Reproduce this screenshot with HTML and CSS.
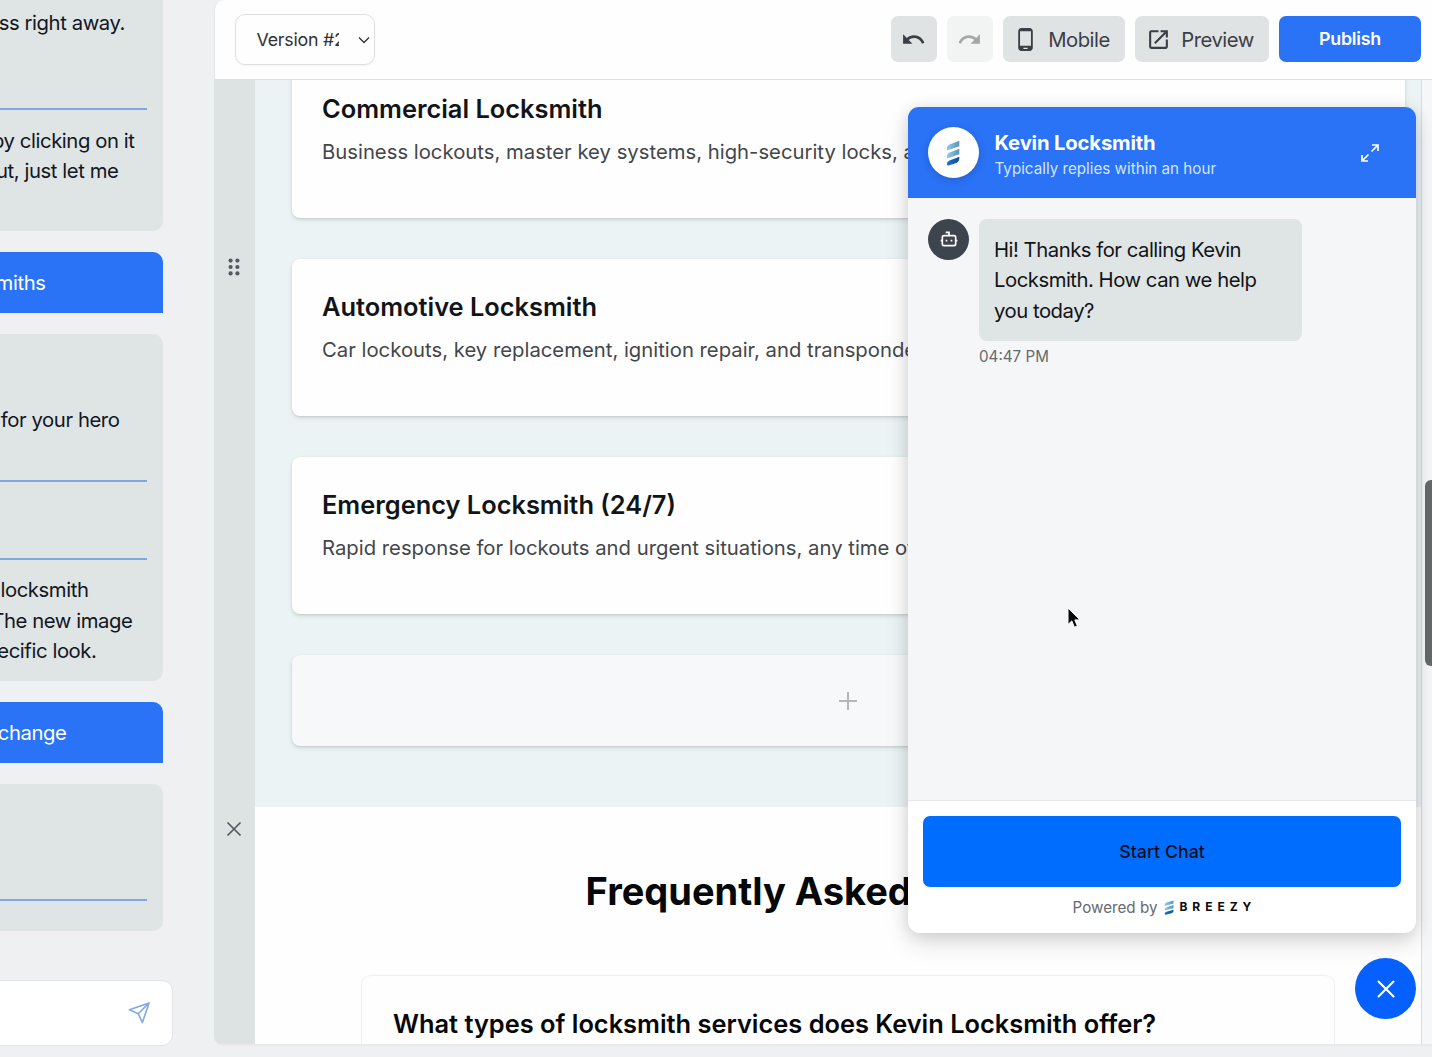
FILE: index.html
```html
<!DOCTYPE html>
<html lang="en">
<head>
<meta charset="utf-8">
<title>Site editor</title>
<link rel="stylesheet" href="styles.css">
</head>
<body>
<div class="app">
  <aside class="assistant">
    <div class="bubble bubble-first">
      <p class="line end-38">ess right away.</p>
      <hr class="rule">
      <p class="line end-28">by clicking on it</p>
      <p class="line end-44">ut, just let me</p>
    </div>
    <div class="reply"><p class="line end-117">miths</p></div>
    <div class="bubble bubble-hero">
      <p class="line end-43">for your hero</p>
      <hr class="rule rule-a">
      <hr class="rule rule-b">
      <p class="line end-74">locksmith</p>
      <p class="line end-30">The new image</p>
      <p class="line end-66">ecific look.</p>
    </div>
    <div class="reply"><p class="line end-96">change</p></div>
    <div class="bubble bubble-last"><hr class="rule"></div>
    <div class="composer">
      <svg class="send" viewBox="0 0 24 24"><path d="M22 2 1.500 9.200l9.200 4.100L15 22.500zM22 2 10.700 13.300"/></svg>
    </div>
  </aside>

  <main class="editor">
    <header class="toolbar">
      <div class="version"><span class="version-text">Version #2</span>
        <svg class="chevron" viewBox="0 0 12 8"><path d="M1 1.500 6 6.500 11 1.500"/></svg>
      </div>
      <div class="actions">
        <button class="btn icon-btn"><svg viewBox="0 0 24 24"><path d="M12.500 8c-2.650 0-5.050.99-6.900 2.600L2 7v9h9l-3.620-3.620c1.390-1.160 3.160-1.880 5.120-1.880 3.540 0 6.550 2.310 7.600 5.500l2.370-.78C21.080 11.030 17.150 8 12.500 8z"/></svg></button>
        <button class="btn icon-btn disabled"><svg viewBox="0 0 24 24"><path d="M18.400 10.600C16.550 8.990 14.150 8 11.500 8c-4.650 0-8.580 3.030-9.960 7.220L3.900 16c1.050-3.190 4.050-5.500 7.600-5.500 1.950 0 3.730.72 5.120 1.880L13 16h9V7l-3.600 3.600z"/></svg></button>
        <button class="btn mobile"><svg viewBox="0 0 24 24"><path d="M16 1H8C6.340 1 5 2.340 5 4v16c0 1.660 1.340 3 3 3h8c1.660 0 3-1.340 3-3V4c0-1.660-1.340-3-3-3zm-2 20h-4v-1h4v1zm3.250-3H6.750V4h10.500v14z"/></svg>Mobile</button>
        <button class="btn preview"><svg viewBox="0 0 24 24"><path d="M19 19H5V5h7V3H5a2 2 0 0 0-2 2v14a2 2 0 0 0 2 2h14c1.100 0 2-.9 2-2v-7h-2v7zM14 3v2h3.590l-9.830 9.830 1.410 1.410L19 6.410V10h2V3h-7z"/></svg>Preview</button>
        <button class="btn publish">Publish</button>
      </div>
    </header>

    <div class="workspace">
      <div class="gutter">
        <svg class="drag" viewBox="0 0 12 18"><circle cx="2.600" cy="2.600" r="2.100"/><circle cx="9.400" cy="2.600" r="2.100"/><circle cx="2.600" cy="9" r="2.100"/><circle cx="9.400" cy="9" r="2.100"/><circle cx="2.600" cy="15.400" r="2.100"/><circle cx="9.400" cy="15.400" r="2.100"/></svg>
        <svg class="remove" viewBox="0 0 16 16"><path d="M1.500 1.500l13 13M14.500 1.500l-13 13"/></svg>
      </div>
      <div class="page">
        <section class="services">
          <article class="card"><h3>Commercial Locksmith</h3><p>Business lockouts, master key systems, high-security locks, and access control.</p></article>
          <article class="card"><h3>Automotive Locksmith</h3><p>Car lockouts, key replacement, ignition repair, and transponder programming.</p></article>
          <article class="card"><h3>Emergency Locksmith (24/7)</h3><p>Rapid response for lockouts and urgent situations, any time of day or night.</p></article>
          <div class="card add"><svg viewBox="0 0 18 18"><path d="M9 0v18M0 9h18"/></svg></div>
        </section>
        <section class="faq">
          <h2>Frequently Asked Questions</h2>
          <div class="question">What types of locksmith services does Kevin Locksmith offer?</div>
        </section>
      </div>
      <div class="track"><div class="thumb"></div></div>
    </div>
  </main>
</div>

<section class="chat">
  <header class="chat-head">
    <div class="avatar">
      <svg viewBox="0 0 14 26"><defs><linearGradient id="pale" x1="0" x2="1"><stop offset="0" stop-color="#8ccdf0"/><stop offset="1" stop-color="#5b93b8"/></linearGradient><linearGradient id="deep" x1="0" x2="1"><stop offset="0" stop-color="#1676d8"/><stop offset="1" stop-color="#174f86"/></linearGradient></defs><path fill="url(#pale)" d="M.8 9Q.8 5.500 3.500 4.500L13.300.8v5.400L1 10.400z"/><path fill="url(#pale)" d="M.8 17Q.8 13.500 3.500 12.500L13.300 8.800v5.400L1 18.400z"/><path fill="url(#deep)" d="M.8 24.200Q.8 21.500 3.500 20.500L13.300 16.800Q13.800 21.600 10.300 22.900L4 25.100Q1.300 26 .8 24.200z"/></svg>
    </div>
    <div class="who"><strong>Kevin Locksmith</strong><span>Typically replies within an hour</span></div>
    <svg class="expand" viewBox="0 0 18 18"><path d="M11 1h6v6M17 1l-6.500 6.500M7 17H1v-6M1 17l6.500-6.500"/></svg>
  </header>
  <div class="chat-body">
    <div class="bot"><svg viewBox="0 0 24 24"><path d="M12 8V4H8"/><rect x="4" y="8" width="16" height="12" rx="2"/><path d="M2 14h2M20 14h2M15 13v2M9 13v2"/></svg></div>
    <div class="message">
      <p>Hi! Thanks for calling Kevin<br>Locksmith. How can we help<br>you today?</p>
      <time>04:47 PM</time>
    </div>
  </div>
  <footer class="chat-foot">
    <button class="start">Start Chat</button>
    <div class="powered"><span>Powered by</span>
      <svg viewBox="0 0 14 26" preserveAspectRatio="none"><path fill="url(#pale)" d="M.8 9Q.8 5.500 3.500 4.500L13.300.8v5.400L1 10.400z"/><path fill="url(#pale)" d="M.8 17Q.8 13.500 3.500 12.500L13.300 8.800v5.400L1 18.400z"/><path fill="url(#deep)" d="M.8 24.200Q.8 21.500 3.500 20.500L13.300 16.800Q13.800 21.600 10.300 22.900L4 25.100Q1.300 26 .8 24.200z"/></svg>
      <b>BREEZY</b></div>
  </footer>
</section>
<button class="close-chat"><svg viewBox="0 0 18 18"><path d="M1.500 1.500l15 15M16.500 1.500l-15 15"/></svg></button>
<svg class="cursor" viewBox="0 0 14 22"><path d="M1 1v16.500l3.800-3.600 2.600 6.300 3-1.200-2.600-6.100H13z"/></svg>
</body>
</html>
```
FILE: styles.css
```css
* { box-sizing: border-box; }
body { margin: 0; height: 1057px; overflow: hidden; background: #eff0f2; font-family: Inter, "Liberation Sans", sans-serif; color: #111418; }
p, h2, h3 { margin: 0; }
button { border: 0; font: inherit; padding: 0; }
svg { display: block; flex: none; }
.app { display: flex; height: 1057px; }

.assistant { width: 173px; flex: none; overflow: hidden; display: flex; flex-direction: column; margin-right: 41px; font-size: 20.3px; letter-spacing: -0.42px; }
.bubble, .reply { width: 162.5px; flex: none; overflow: hidden; }
.bubble { background: #dfe4e5; color: #12161e; }
.bubble-first { height: 231px; padding-top: 8px; border-radius: 0 0 10px 0; }
.bubble-first .rule { margin: 69px 0 16px; }
.reply { height: 61px; margin: 21px 0; padding-top: 15.500px; background: #2a72f6; color: #fff; border-radius: 0 10px 0 0; }
.bubble-hero { height: 347px; padding-top: 71px; border-radius: 0 10px 10px 0; }
.bubble-hero .rule-a { margin: 44px 0 76px; }
.bubble-hero .rule-b { margin: 0 0 15.500px; }
.bubble-last { height: 147px; padding-top: 115px; border-radius: 0 10px 10px 0; }
.rule { width: 147px; height: 2px; margin: 0; border: 0; background: #82a5e4; }
.line { display: flex; justify-content: flex-end; white-space: nowrap; line-height: 30.5px; }
.end-38 { padding-right: 37.500px; }
.end-28 { padding-right: 28px; }
.end-44 { padding-right: 44px; }
.end-117 { padding-right: 117px; }
.end-43 { padding-right: 43px; }
.end-74 { padding-right: 74px; }
.end-30 { padding-right: 30px; }
.end-66 { padding-right: 66px; }
.end-96 { padding-right: 96px; }
.composer { height: 66px; margin: 49px 0 0 -20px; padding: 0 21px 2px 0; display: flex; align-items: center; justify-content: flex-end; background: #fff; border: 1px solid #e2e4e6; border-radius: 11px; }
.send { width: 23px; height: 23px; fill: none; stroke: #82a9e8; stroke-width: 1.7; stroke-linejoin: round; }

.editor { flex: 1; min-width: 0; height: 1046px; display: flex; flex-direction: column; overflow: hidden; border-radius: 10px 0 0 10px; }
.toolbar { height: 80px; flex: none; display: flex; justify-content: space-between; align-items: flex-start; padding: 14px 11px 0 20px; background: #fefefe; border-bottom: 1px solid #dddfe0; border-left: 1px solid #e4e5e7; border-radius: 10px 0 0 0; }
.version { width: 140px; height: 51px; display: flex; align-items: center; padding: 0 4px 0 20.500px; border: 1px solid #dedfe1; border-radius: 10px; box-shadow: 0 1px 2px #0000000d; font-size: 17.8px; letter-spacing: -0.22px; color: #303235; }
.version-text { width: 82px; overflow: hidden; white-space: nowrap; }
.chevron { width: 12px; height: 8px; margin-left: 19px; fill: none; stroke: #303235; stroke-width: 1.3; }
.actions { display: flex; gap: 10px; padding-top: 2px; }
.btn { height: 46px; display: flex; align-items: center; justify-content: center; border-radius: 7px; background: #dfe3e4; color: #3b3e44; font-size: 20.3px; letter-spacing: -0.5px; }
.btn svg { width: 25px; height: 25px; fill: #3b3e44; }
.icon-btn { width: 46px; }
.icon-btn svg { margin-right: 1px; }
.btn.disabled { background: #f2f3f3; }
.btn.disabled svg { fill: #a4a6a8; }
.mobile { width: 122px; gap: 10px; padding-right: 5px; }
.preview { width: 134px; gap: 10px; padding-right: 4px; }
.btn.publish { width: 142px; background: #2a72f6; color: #fff; font-size: 17.8px; font-weight: 600; letter-spacing: -0.2px; padding-bottom: 1px; }

.workspace { flex: 1; min-height: 0; display: flex; overflow: hidden; border-bottom: 2px solid #e7e9ea; }
.gutter { width: 41px; flex: none; display: flex; flex-direction: column; align-items: center; background: #dde3e3; }
.drag { width: 12px; height: 18px; margin: 178px .5px 0 0; fill: #55585e; }
.remove { width: 16px; height: 16px; margin: 545px .5px 0 0; stroke: #55585e; stroke-width: 1.7; }
.page { width: 1166px; flex: none; overflow: hidden; }
.services { margin-top: -19px; padding: 0 16px 61px 37px; display: flex; flex-direction: column; gap: 41px; background: #ecf3f4; }
.card { height: 157px; flex: none; padding: 30px; background: #fefefe; border-radius: 8px; box-shadow: 0 2px 5px #0000001c, 0 1px 2px #00000014; white-space: nowrap; }
.card h3 { font-size: 25.4px; font-weight: 600; line-height: 35px; }
.card p { margin-top: 11px; font-size: 20.3px; line-height: 30.5px; color: #43464a; }
.card.add { height: 91px; display: flex; align-items: center; justify-content: center; background: #f7f8fa; }
.add svg { width: 18px; height: 18px; margin-right: 1px; stroke: #b6b7b9; stroke-width: 2; }
.faq { height: 260px; padding: 61px 86px 0 106px; background: #fefefe; }
.faq h2 { font-size: 38px; line-height: 46px; font-weight: 700; text-align: center; color: #060708; }
.question { margin-top: 61px; height: 120px; padding: 32px 31px; font-size: 25.4px; line-height: 32px; font-weight: 600; border: 1px solid #f0f1f2; border-radius: 10px; box-shadow: 0 0 2px #00000008; white-space: nowrap; color: #060708; }
.track { flex: 1; padding: 400px 0 0 3px; background: #f6f7f8; border-left: 1px solid #d9dcdd; }
.thumb { height: 186px; background: #646a6a; border-radius: 6px 0 0 6px; }

.chat { position: absolute; left: 908px; top: 107px; width: 508px; height: 826px; display: flex; flex-direction: column; background: #fff; border-radius: 12px; box-shadow: 0 10px 25px #00000020, 0 2px 16px #0000001c; }
.chat-head { height: 91px; flex: none; display: flex; align-items: center; padding: 0 37px 0 20px; color: #fff; background: #2a72f6; border-radius: 11px 11px 0 0; }
.avatar { width: 51px; height: 51px; display: flex; align-items: center; justify-content: center; background: #fff; border-radius: 50%; box-shadow: 0 2px 8px #0000002a; }
.avatar svg { width: 14px; height: 26px; margin-right: 1px; }
.who { flex: 1; display: flex; flex-direction: column; padding: 8px 0 0 15.500px; }
.who strong { font-size: 20.3px; line-height: 24px; font-weight: 700; letter-spacing: -0.18px; }
.who span { font-size: 15.2px; line-height: 27px; color: #d2e5ff; }
.expand { width: 18px; height: 18px; fill: none; stroke: #fff; stroke-width: 1.7; }
.chat-body { flex: 1; display: flex; align-items: flex-start; gap: 10px; padding: 21px 20px; background: #f5f6f8; }
.bot { width: 41px; height: 41px; flex: none; display: flex; align-items: center; justify-content: center; border-radius: 50%; background: #3d444d; }
.bot svg { width: 20px; height: 20px; margin-bottom: 1px; fill: none; stroke: #fff; stroke-width: 2; }
.message p { width: 323px; height: 122px; padding: 15.500px 15px; font-size: 20.3px; line-height: 30.5px; letter-spacing: -0.48px; background: #dfe4e5; border-radius: 8px; }
.message time { display: block; margin-top: 6px; font-size: 15.2px; line-height: 20px; color: #66696d; }
.chat-foot { height: 133px; flex: none; padding: 15px; border-top: 1px solid #e5e7e9; }
.start { width: 478px; height: 71px; border-radius: 7px; background: #006dff; color: #061022; font-size: 17.8px; font-weight: 500; }
.powered { display: flex; align-items: center; justify-content: center; height: 20px; margin-top: 10px; font-size: 15.2px; color: #66696d; }
.powered svg { width: 10px; height: 15px; margin: 0 5px 0 7px; }
.powered b { font-size: 12px; letter-spacing: 4.95px; margin: 0 -4.95px 1px 0; color: #090b0e; font-weight: 700; }
.close-chat { position: absolute; left: 1355px; top: 958px; width: 61px; height: 61px; display: flex; align-items: center; justify-content: center; border-radius: 50%; background: #0560ff; }
.close-chat svg { width: 18px; height: 18px; stroke: #fff; stroke-width: 2.1; stroke-linecap: round; }
.cursor { position: absolute; left: 1067px; top: 607px; width: 14px; height: 22px; fill: #08090a; stroke: #fff; stroke-width: 1; }
```
